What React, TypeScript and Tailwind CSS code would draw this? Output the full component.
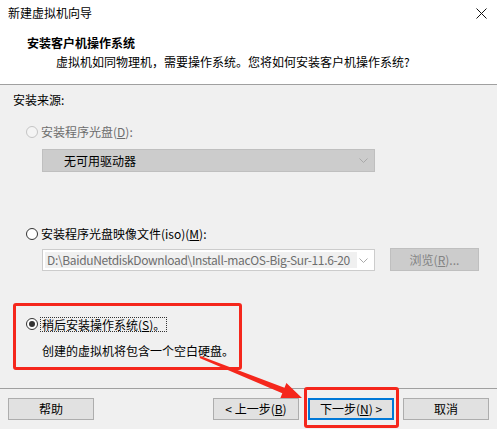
function Radio({ state }: { state: "disabled" | "off" | "on" }) {
  if (state === "disabled") {
    return <span className="h-[12px] w-[12px] shrink-0 rounded-full border border-[#c4c4c4] bg-[#f4f4f4]" />;
  }
  return (
    <span className="flex h-[12px] w-[12px] shrink-0 items-center justify-center rounded-full border border-[#333333] bg-white">
      {state === "on" && <span className="h-[6px] w-[6px] rounded-full bg-[#333333]" />}
    </span>
  );
}

function Chevron() {
  return (
    <svg width="9" height="5" viewBox="0 0 9 5" className="shrink-0">
      <polyline points="0.5,0.5 4.5,4.5 8.5,0.5" fill="none" stroke="#a8a8a8" strokeWidth="1" />
    </svg>
  );
}

function Btn({ children, primary }: { children: React.ReactNode; primary?: boolean }) {
  return (
    <div
      className={
        "flex h-[22px] w-[86px] items-center justify-center bg-[#e1e1e1] leading-none " +
        (primary ? "border-2 border-[#0078d7]" : "border border-[#adadad]")
      }
    >
      {children}
    </div>
  );
}

export default function App() {
  return (
    <div className="relative h-[429px] w-[497px] overflow-hidden bg-[#f0f0f0] font-['Noto_Sans_CJK_SC',sans-serif] text-[12px] text-black">
      <div className="h-[85px] border-b border-[#a0a0a0] bg-white">
        <div className="flex h-[26px] items-center justify-between pl-[8px] pr-[10px]">
          <span>新建虚拟机向导</span>
          <svg width="11" height="11" viewBox="0 0 11 11">
            <path d="M0.5 0.5 L10.5 10.5 M10.5 0.5 L0.5 10.5" stroke="#111" strokeWidth="1" />
          </svg>
        </div>
        <div className="pl-[27px] pt-[9px] font-bold leading-[16px]">安装客户机操作系统</div>
        <div className="pl-[56px] pt-[3px] leading-[16px]">
          虚拟机如同物理机，需要操作系统。您将如何安装客户机操作系统?
        </div>
      </div>

      <div className="px-[13px]">
        <div className="pt-[7px] leading-[16px]">安装来源:</div>

        <div className="ml-[13px] mt-[16px] flex h-[16px] items-center gap-[3px] text-[#6d6d6d]">
          <Radio state="disabled" />
          <span>
            安装程序光盘(<span className="underline">D</span>):
          </span>
        </div>
        <div className="ml-[29px] mt-[9px] flex h-[23px] w-[333px] items-center justify-between border border-[#bfbfbf] bg-[#cccccc] pl-[21px] pr-[6px]">
          <span>无可用驱动器</span>
          <Chevron />
        </div>

        <div className="ml-[13px] mt-[54px] flex h-[16px] items-center gap-[3px]">
          <Radio state="off" />
          <span>
            安装程序光盘映像文件(iso)(<span className="underline">M</span>):
          </span>
        </div>
        <div className="ml-[29px] mt-[6px] flex items-start">
          <div className="mt-[1px] flex h-[22px] w-[333px] items-center justify-between border border-[#cccccc] bg-white p-[2px] pr-[6px]">
            <div className="h-full w-[312px] whitespace-nowrap bg-[#f0f0f0] pl-[2px] leading-[16px] tracking-[-0.35px] text-[#6d6d6d]">
              D:\BaiduNetdiskDownload\Install-macOS-Big-Sur-11.6-20
            </div>
            <Chevron />
          </div>
          <div className="ml-[15px] flex h-[23px] w-[89px] items-center justify-center border border-[#bfbfbf] bg-[#cccccc] text-[#838383]">
            <span>
              浏览(<span className="underline">R</span>)...
            </span>
          </div>
        </div>

        <div className="ml-[13px] mt-[45px] flex h-[16px] items-center gap-[2px]">
          <Radio state="on" />
          <span className="border border-dotted border-[#333] px-[1px] leading-[13px]">
            稍后安装操作系统(<span className="underline">S</span>)。
          </span>
        </div>
        <div className="ml-[29px] mt-[11px] leading-[16px]">创建的虚拟机将包含一个空白硬盘。</div>
      </div>

      <div className="mt-[29px] border-t border-[#a0a0a0] pt-[9px]">
        <div className="flex items-center justify-between pl-[8px] pr-[8px]">
          <Btn>帮助</Btn>
          <div className="flex gap-[9px]">
            <Btn>
              &lt; 上一步(<span className="underline">B</span>)
            </Btn>
            <Btn primary>
              下一步(<span className="underline">N</span>) &gt;
            </Btn>
            <Btn>取消</Btn>
          </div>
        </div>
      </div>

      {/* annotation overlay */}
      <div className="pointer-events-none absolute left-[13px] top-[303px] h-[67px] w-[229px] rounded-[3px] border-[3px] border-[#f5271c]" />
      <div className="pointer-events-none absolute left-[304px] top-[387px] h-[41px] w-[95px] rounded-[3px] border-[3px] border-[#f5271c]" />
      <svg className="pointer-events-none absolute left-0 top-0" width="497" height="429" viewBox="0 0 497 429">
        <polygon
          points="200.4,356 284.5,387.7 286.4,383.1 302,398 280.4,397.9 282.3,393.3 199.6,358"
          fill="#f5271c"
        />
      </svg>
    </div>
  );
}
